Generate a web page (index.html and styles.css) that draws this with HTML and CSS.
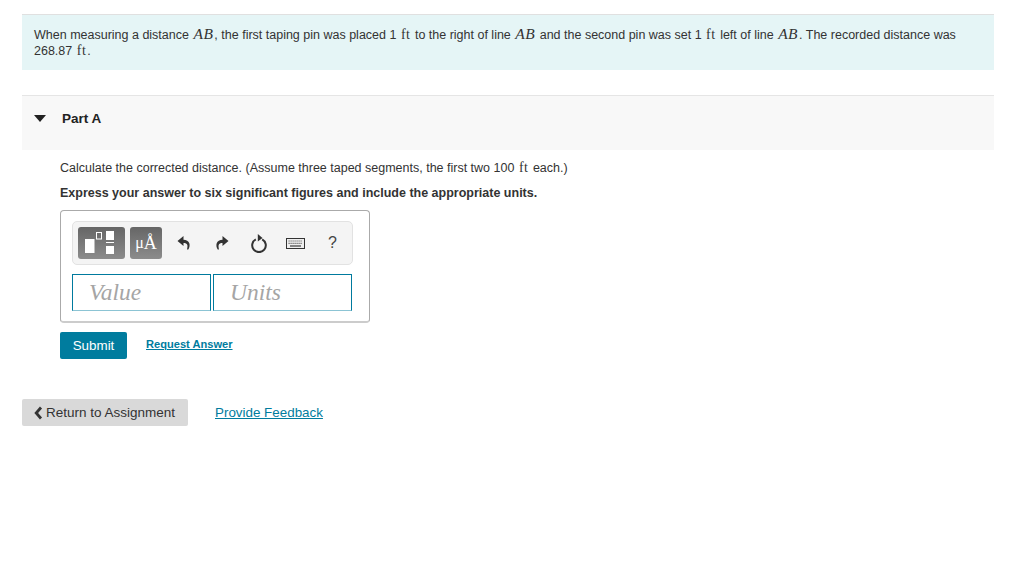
FILE: index.html
```html
<!DOCTYPE html>
<html lang="en">
<head>
  <meta charset="UTF-8" />
  <title>Part A</title>
  <link rel="stylesheet" href="styles.css">
</head>
<body>
  <div class="page">
    <!-- Problem statement -->
    <div class="intro">
      <p>When measuring a distance <i class="math">AB</i>, the first taping pin was placed 1 <span class="unit">ft</span> to the right of line <i class="math">AB</i> and the second pin was set 1 <span class="unit">ft</span> left of line <i class="math">AB</i>. The recorded distance was 268.87 <span class="unit">ft</span>.</p>
    </div>

    <!-- Part header -->
    <div class="part-header">
      <span class="part-arrow"></span>
      <h2>Part A</h2>
    </div>

    <div class="part-body">
      <p class="question">Calculate the corrected distance. (Assume three taped segments, the first two 100 <span class="unit">ft</span> each.)</p>
      <p class="instruction">Express your answer to six significant figures and include the appropriate units.</p>

      <div class="answer-box">
        <div class="toolbar">
          <button class="tool-btn tool-templates" aria-label="Templates">
            <svg width="47" height="32" viewBox="0 0 47 32">
              <rect x="7" y="12" width="9.500" height="14" fill="#fff"/>
              <rect x="18.500" y="5.500" width="5" height="6.500" fill="none" stroke="#fff"/>
              <rect x="28" y="4" width="8" height="9" fill="#fff"/>
              <rect x="28" y="15" width="8" height="1" fill="#fff"/>
              <rect x="28" y="19" width="8" height="8" fill="#fff"/>
            </svg>
          </button>
          <button class="tool-btn tool-units" aria-label="Units"><span class="mu">μ</span><span class="ang">Å</span></button>
          <span class="tool-icon tool-undo">
            <svg width="16" height="16" viewBox="0 0 16 16"><path d="M7.500 1 1.500 6l6 5V8c2 0 3.300.6 3.800 2 .3 1 .2 2.300-.3 4.500h1.300c1.200-2 1.700-4.300 1-6.300C12.500 6 10.300 4.800 7.500 4.800z" fill="#333"/></svg>
          </span>
          <span class="tool-icon tool-redo">
            <svg width="16" height="16" viewBox="0 0 16 16"><path d="M8.500 1l6 5-6 5V8c-2 0-3.300.6-3.800 2-.3 1-.2 2.300.3 4.500H3.700c-1.200-2-1.700-4.300-1-6.300C3.500 6 5.700 4.800 8.500 4.800z" fill="#333"/></svg>
          </span>
          <span class="tool-icon">
            <svg width="18" height="20" viewBox="0 0 18 20"><path d="M5.800 6.300a6.800 6.800 0 1 0 6.400 0" fill="none" stroke="#333" stroke-width="2"/><path d="M7.800 1v7.500L12.500 5z" fill="#333"/></svg>
          </span>
          <span class="tool-icon">
            <svg width="19" height="11" viewBox="0 0 19 11"><rect x=".5" y=".5" width="18" height="10" fill="#eee" stroke="#333"/><path d="M2.500 3h14M2.500 5.300h14" stroke="#666" stroke-width="1.200" stroke-dasharray="1.200 .8"/><path d="M4 8h11" stroke="#555" stroke-width="1.400"/></svg>
          </span>
          <span class="tool-icon tool-help">?</span>
        </div>
        <div class="inputs">
          <div class="input-field">Value</div>
          <div class="input-field">Units</div>
        </div>
      </div>

      <div class="actions">
        <button class="btn-submit">Submit</button>
        <a href="#" class="link-answer">Request Answer</a>
      </div>
    </div>

    <div class="footer-row">
      <button class="btn-return">
        <svg width="9" height="14" viewBox="0 0 9 14"><path d="M7 1.500 2.200 7 7 12.500" fill="none" stroke="#333" stroke-width="2.800"/></svg>
        Return to Assignment
      </button>
      <a href="#" class="link-feedback">Provide Feedback</a>
    </div>
  </div>
</body>
</html>
```

FILE: styles.css
```css
html, body {
  margin: 0;
  padding: 0;
  background-color: #fff;
}

body {
  font-family: "Liberation Sans", Arial, sans-serif;
  font-size: 12.500px;
  color: #333;
}

.page {
  margin: 0 30px 0 22px;
  padding-top: 14px;
  height: 549px;
  overflow: hidden;
}

p {
  margin: 0;
}

.math {
  font-family: "Liberation Serif", serif;
  font-size: 15.500px;
  letter-spacing: 0.5px;
  padding: 0 1px;
}

.unit {
  font-family: "Liberation Serif", serif;
  font-size: 14px;
  letter-spacing: 0.5px;
  padding: 0 1px;
}

/* Problem statement */
.intro {
  background-color: #e5f5f6;
  border-top: 1px solid #e0e0e0;
  height: 56px;
  box-sizing: border-box;
  padding: 11px 12px 0;
  line-height: 16px;
}

/* Part header */
.part-header {
  display: flex;
  align-items: center;
  margin-top: 25px;
  height: 55px;
  box-sizing: border-box;
  background-color: #f8f8f8;
  border-top: 1px solid #e5e5e5;
  padding: 0 12px 9px;
}

.part-arrow {
  width: 0;
  height: 0;
  border-left: 6px solid transparent;
  border-right: 6px solid transparent;
  border-top: 7px solid #222;
  margin-right: 16px;
}

.part-header h2 {
  margin: 0;
  font-size: 13.500px;
  font-weight: bold;
  color: #222;
}

/* Part body */
.part-body {
  padding: 10px 0 0 38px;
}

.question {
  line-height: 16px;
}

.instruction {
  margin-top: 9px;
  line-height: 16px;
  font-weight: bold;
}

.answer-box {
  width: 310px;
  height: 113px;
  box-sizing: border-box;
  margin-top: 9px;
  border: 1px solid #aaa;
  border-bottom-color: #ccc;
  border-bottom-width: 2px;
  border-radius: 4px;
  padding: 10px 11px;
}

.toolbar {
  display: flex;
  align-items: center;
  height: 44px;
  box-sizing: border-box;
  width: 281px;
  background-color: #f4f4f4;
  border: 1px solid #e2e2e2;
  border-radius: 5px;
  padding: 0 5px;
}

.tool-btn {
  display: flex;
  align-items: center;
  justify-content: center;
  height: 32px;
  padding: 0;
  border: none;
  border-radius: 3px;
  background: linear-gradient(#666, #8c8c8c);
  color: #fff;
  flex: none;
}

.tool-templates {
  width: 47px;
}

.tool-units {
  width: 32px;
  margin-left: 5px;
  font-family: "Liberation Serif", serif;
  font-size: 16px;
}

.tool-units .ang {
  font-size: 18px;
}

.tool-icon {
  display: flex;
  align-items: center;
  justify-content: center;
  width: 37px;
  flex: none;
}

.tool-undo {
  margin-left: 3px;
}

.tool-redo {
  margin-left: 1px;
}

.tool-help {
  font-size: 16px;
  color: #444;
}

.inputs {
  display: flex;
  gap: 2px;
  margin-top: 9px;
}

.input-field {
  width: 139px;
  height: 37px;
  box-sizing: border-box;
  border: 1px solid #007a9e;
  border-bottom-color: #8cc4d4;
  padding-left: 16px;
  font-family: "Liberation Serif", serif;
  font-style: italic;
  font-size: 23.500px;
  line-height: 34px;
  color: #a5a5a5;
}

.actions {
  display: flex;
  align-items: center;
  margin-top: 9px;
}

.btn-submit {
  width: 67px;
  height: 27px;
  padding: 0;
  border: none;
  border-radius: 2px;
  background-color: #007c9e;
  color: #fff;
  font-family: inherit;
  font-size: 13.400px;
}

.link-answer {
  margin-left: 19px;
  margin-top: -3px;
  font-size: 11.100px;
  font-weight: bold;
  color: #007c9e;
}

/* Bottom row */
.footer-row {
  display: flex;
  align-items: center;
  margin-top: 40px;
}

.btn-return {
  display: flex;
  align-items: center;
  gap: 3px;
  width: 166px;
  height: 27px;
  padding: 0 0 0 12px;
  border: none;
  border-radius: 2px;
  background-color: #d9d9d9;
  color: #333;
  font-family: inherit;
  font-size: 13.500px;
}

.link-feedback {
  margin-left: 27px;
  font-size: 13.400px;
  color: #007c9e;
}
```
